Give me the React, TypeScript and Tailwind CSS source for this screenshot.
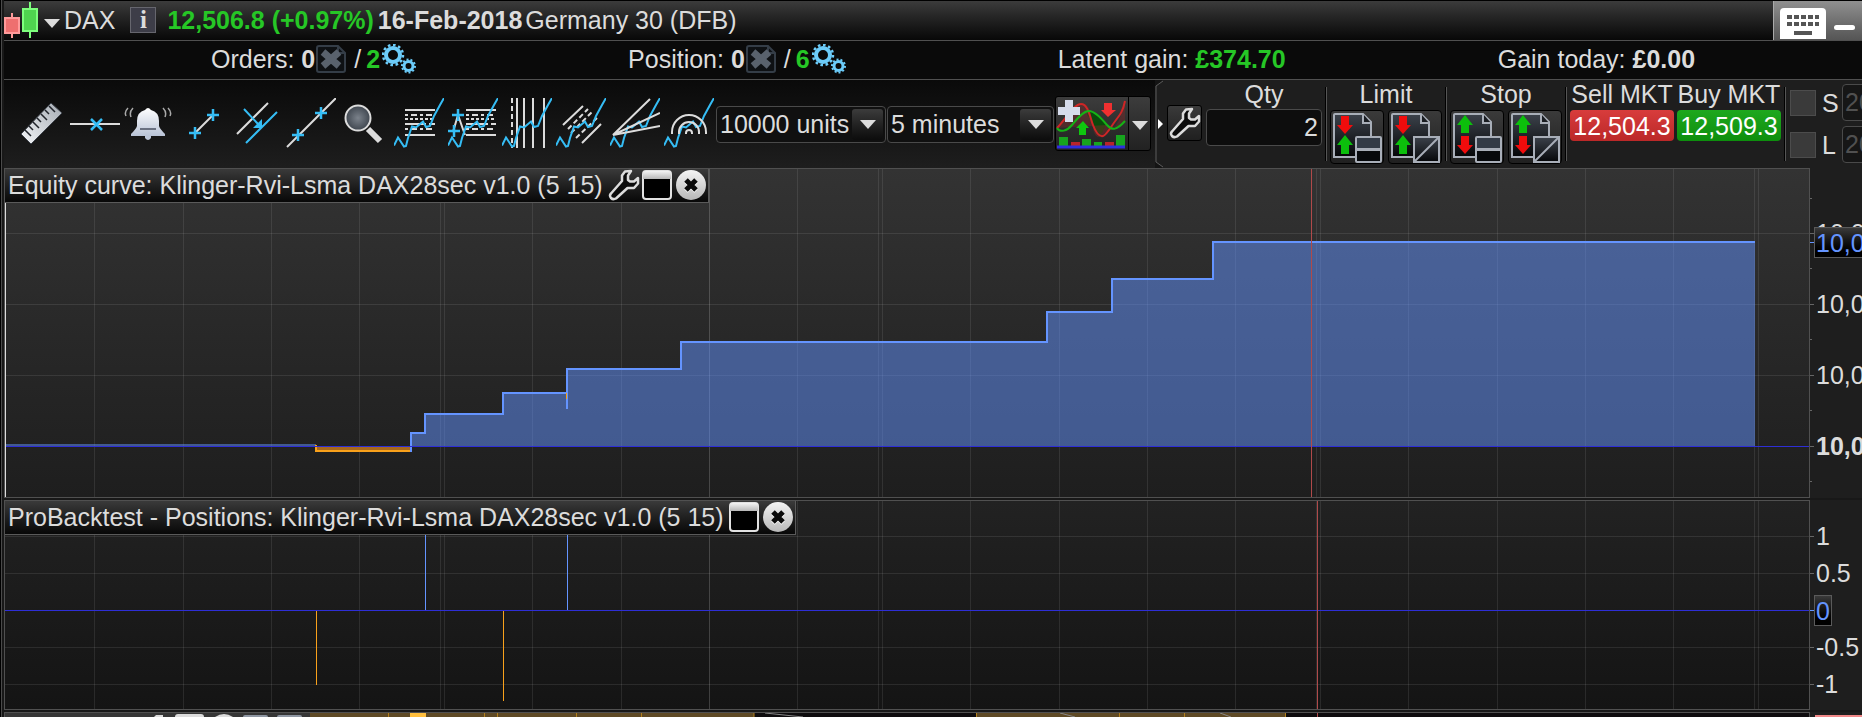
import React from 'react';
import clsx from 'clsx';

const GRID_X = [89, 178, 266, 354, 435, 439, 527, 616, 704, 792, 873, 877, 965, 1054, 1142, 1230, 1311, 1315, 1403, 1492, 1580, 1668, 1749, 1753];

const CURVE = '0,47.5 4,39.5 10,48.5 12,48 14,40 18,28.5 22,29.5 29,23.5 32,29 36,28 40,18 46,7 50,0';

const WHITE = '#dcdcdc';
const CYAN = '#35bdf5';

const Plus = ({ x, y }: { x: number; y: number }) => (
  <path d={`M${x - 6} ${y}h12M${x} ${y - 6}v12`} stroke={CYAN} strokeWidth="2.5" fill="none" />
);

const Curve = () => <polyline points={CURVE} stroke={CYAN} strokeWidth="2" fill="none" />;

const tools: { name: string; drawing: React.ReactNode }[] = [
  {
    name: 'Ruler',
    drawing: (
      <>
        <path d="M5 36 35 5 46 15 15 46z" fill="url(#metal)" stroke="#3b4048" strokeWidth="1" />
        <path d="M9 32l6 6M13 28l4 4M17 24l6 6M21 20l4 4M25 16l6 6M29 12l4 4M33 8l6 6" stroke="#20242a" strokeWidth="1.5" />
      </>
    ),
  },
  {
    name: 'Horizontal line',
    drawing: (
      <>
        <path d="M0 26H50" stroke={WHITE} strokeWidth="2" />
        <path d="M21 21l11 11M32 21L21 32" stroke={CYAN} strokeWidth="2.5" />
      </>
    ),
  },
  {
    name: 'Alert',
    drawing: (
      <>
        <path d="M21 12q3-4 6 0 8 2 8 11v5q1 3 6 8v2H7v-2q5-5 6-8v-5q0-9 8-11z" fill="url(#bell)" />
        <path d="M21 38h6v2q-3 4-6 0z" fill="#bcc6d8" />
        <path d="M16 31h16" stroke="#4a5160" strokeWidth="1.5" />
        <path d="M9 10q-4 4-2 9M4 10q-4 4-2 8M39 10q4 4 2 9M44 10q4 4 2 8" stroke="#aaa" strokeWidth="1.5" fill="none" />
      </>
    ),
  },
  {
    name: 'Segment',
    drawing: (
      <>
        <path d="M17 35L35 17" stroke={WHITE} strokeWidth="2" />
        <Plus x={17} y={35} />
        <Plus x={35} y={17} />
      </>
    ),
  },
  {
    name: 'Channel',
    drawing: (
      <>
        <path d="M5 36L36 5" stroke={WHITE} strokeWidth="2" />
        <path d="M14 45L45 14M12 11L26 26" stroke={CYAN} strokeWidth="2" />
        <path d="M30 30H21L30 21z" fill={CYAN} />
      </>
    ),
  },
  {
    name: 'Line',
    drawing: (
      <>
        <path d="M1 49L50 0" stroke={WHITE} strokeWidth="2" />
        <Plus x={12} y={37} />
        <Plus x={35} y={15} />
      </>
    ),
  },
  {
    name: 'Zoom',
    drawing: (
      <>
        <path d="M28 31L40 43" stroke={WHITE} strokeWidth="6" />
        <circle cx="18" cy="20" r="12.5" fill="url(#lens)" stroke={WHITE} strokeWidth="2" />
      </>
    ),
  },
  {
    name: 'Fibonacci retracement',
    drawing: (
      <>
        <path d="M11 12H41M11 37H41M11 26H32M35 26H41" stroke={WHITE} strokeWidth="2" />
        <path d="M11 17H41M11 31H41" stroke={WHITE} strokeWidth="2" strokeDasharray="3 3 6 3" />
        <path d="M11 21H41" stroke={WHITE} strokeWidth="2" strokeDasharray="3 2" />
        <Curve />
      </>
    ),
  },
  {
    name: 'Fibonacci extension',
    drawing: (
      <>
        <path d="M18 12H48M18 37H48M18 26H40M43 26H48M5 34L10 17L17 37" stroke={WHITE} strokeWidth="2" fill="none" />
        <path d="M18 17H48M18 31H48" stroke={WHITE} strokeWidth="2" strokeDasharray="3 3 6 3" />
        <path d="M18 21H48" stroke={WHITE} strokeWidth="2" strokeDasharray="3 2" />
        <Curve />
        <Plus x={10} y={17} />
        <Plus x={6} y={33} />
      </>
    ),
  },
  {
    name: 'Time zones',
    drawing: (
      <>
        <path d="M15 0V50M22 0V50M31 0V50M42 0V50" stroke={WHITE} strokeWidth="2" />
        <path d="M10 0V50" stroke={WHITE} strokeWidth="2" strokeDasharray="5 3" />
        <Curve />
      </>
    ),
  },
  {
    name: 'Fibonacci channel',
    drawing: (
      <>
        <path d="M7 27L27 8M26 45L45 26" stroke={WHITE} strokeWidth="2" />
        <path d="M12 31L32 11M15 35L36 14M20 40L41 20" stroke={WHITE} strokeWidth="2" strokeDasharray="5 3" />
        <Curve />
      </>
    ),
  },
  {
    name: 'Fan',
    drawing: (
      <>
        <Curve />
        <path d="M40 1L3 37L50 15M3 37L50 28" stroke={WHITE} strokeWidth="2" fill="none" />
      </>
    ),
  },
  {
    name: 'Arcs',
    drawing: (
      <>
        <Curve />
        <path
          d="M8 36v-2a17 17 0 0 1 34 0v2M15 36v-2a10 10 0 0 1 20 0v2M22 36v-1a3 3 0 0 1 6 0v1"
          stroke={WHITE}
          strokeWidth="2"
          fill="none"
        />
      </>
    ),
  },
];

const Defs = () => (
  <svg width="0" height="0" className="absolute" aria-hidden="true">
    <defs>
      <linearGradient id="metal" x1="1" y1="0" x2="0" y2="1">
        <stop offset="0" stopColor="#a6acb4" />
        <stop offset="1" stopColor="#f4f6f8" />
      </linearGradient>
      <linearGradient id="bell" x1="0" y1="0" x2="0" y2="1">
        <stop offset="0" stopColor="#fff" />
        <stop offset="1" stopColor="#b9c3d6" />
      </linearGradient>
      <radialGradient id="lens">
        <stop offset="0" stopColor="#7b828b" />
        <stop offset="1" stopColor="#3f464f" />
      </radialGradient>
      <linearGradient id="doc" x1="0" y1="0" x2="0" y2="1">
        <stop offset="0" stopColor="#3c424b" />
        <stop offset="1" stopColor="#050608" />
      </linearGradient>
      <linearGradient id="knob" x1="0" y1="0" x2="0" y2="1">
        <stop offset="0" stopColor="#f4f4f4" />
        <stop offset="1" stopColor="#b8b8b8" />
      </linearGradient>
    </defs>
  </svg>
);

const Wrench = () => (
  <svg width="32" height="32" viewBox="0 0 32 32">
    <path
      d="M17 2.500 23 2 20 6.500V11L22 12.500H26L30 9V14.500L26 19H19.500L8 29.500Q5 31 3 29 1 26.500 3 24.500L14 12V6.500z"
      fill="#0b0b0b"
      stroke="#dcdcdc"
      strokeWidth="2.5"
      strokeLinejoin="round"
    />
  </svg>
);

const WindowIcon = () => (
  <svg width="30" height="30" viewBox="0 0 30 30">
    <rect x="1" y="1" width="28" height="28" rx="3" fill="#000" stroke="#e2e2e2" strokeWidth="2" />
    <path d="M1 9V4q0-3 3-3h22q3 0 3 3v5z" fill="url(#knob)" />
  </svg>
);

const CloseIcon = () => (
  <svg width="30" height="30" viewBox="0 0 30 30">
    <circle cx="15" cy="15" r="15" fill="url(#knob)" />
    <path d="M10 10L20 20M20 10L10 20" stroke="#fff" strokeWidth="5" transform="translate(0 1)" />
    <path d="M10 10L20 20M20 10L10 20" stroke="#0a0a0a" strokeWidth="5" />
  </svg>
);

const CancelDoc = () => (
  <svg width="30" height="28" viewBox="0 0 30 28">
    <path d="M1 3q0-2 2-2h19l7 7v17q0 2-2 2H3q-2 0-2-2z" fill="#0e1114" stroke="#343d47" strokeWidth="2" />
    <path d="M22 1v7h7" fill="none" stroke="#343d47" strokeWidth="2" />
    <path d="M7 7L23 21M23 7L7 21" stroke="#59626d" strokeWidth="7" />
  </svg>
);

const Gears = () => (
  <svg width="34" height="30" viewBox="0 0 34 30" fill="none" stroke="#6cccfa">
    <circle cx="11" cy="11" r="7" strokeWidth="4" />
    <circle cx="11" cy="11" r="10" strokeWidth="2.5" pathLength="24" strokeDasharray="1 1" />
    <circle cx="26.500" cy="22" r="4.500" strokeWidth="3" />
    <circle cx="26.500" cy="22" r="6.500" strokeWidth="2" pathLength="20" strokeDasharray="1 1" />
  </svg>
);

const Arrow = () => (
  <svg width="16" height="9" viewBox="0 0 16 9">
    <path d="M0 0H16L8 9z" fill="#dcdcdc" />
  </svg>
);

const OrderIcon = ({ stop, diagonal }: { stop?: boolean; diagonal?: boolean }) => (
  <svg width="52" height="52" viewBox="0 0 52 52">
    <path d="M3 4q0-1 1-1H32L40 11V46H3z" fill="url(#doc)" stroke="#a8aeb8" strokeWidth="2" />
    <path d="M32 3V12H40" fill="#1a1d22" stroke="#a8aeb8" strokeWidth="2" />
    {stop ? (
      <>
        <path d="M14 4L22 14H18V22H10V14H6z" fill="#0cbf0c" />
        <path d="M10 25H18V34H22L14 43L6 34H10z" fill="#f00c0c" />
      </>
    ) : (
      <>
        <path d="M10 5H18V14H22L14 23L6 14H10z" fill="#f00c0c" />
        <path d="M14 24L22 34H18V43H10V34H6z" fill="#0cbf0c" />
      </>
    )}
    {diagonal ? (
      <>
        <rect x="25" y="26" width="25" height="25" fill="url(#doc)" stroke="#a8aeb8" strokeWidth="2" />
        <path d="M26 50L49 27" stroke="#a8aeb8" strokeWidth="2" />
      </>
    ) : (
      <>
        <rect x="25" y="26" width="25" height="25" rx="1" fill="#07090c" stroke="#a8aeb8" strokeWidth="2" />
        <rect x="26" y="27" width="23" height="11" fill="#333b46" />
        <path d="M25 38.500H50" stroke="#a8aeb8" strokeWidth="3" />
      </>
    )}
  </svg>
);

const IndicatorIcon = () => (
  <svg width="70" height="52" viewBox="0 0 70 52" className="block">
    <path d="M31 18Q36 24 39 34 45 44 50 26 40 14 31 14z" fill="#0b4a0b" />
    <path d="M1 31Q14 10 24 7T36 24 45 39 58 30 69 4V24Q60 34 50 28" fill="#7a2a2a" fillOpacity="0.45" />
    <path d="M1 31C10 22 18 7 25 7S34 20 37 28 43 40 47 39 56 28 60 23 67 14 69 4" fill="none" stroke="#cf2626" strokeWidth="2" />
    <path d="M1 31C4 36 11 34 16 28S27 14 33 14 46 22 51 28 61 33 69 24" fill="none" stroke="#15b315" strokeWidth="2" />
    <path d="M3 40h9v9H3zM26 42h9v7h-9zM38 45h8v4h-8zM60 38h9v11h-9z" fill="#17a51e" />
    <path d="M15 45h9v4h-9zM49 45h9v4h-9z" fill="#b8242a" />
    <path d="M1 50H69" stroke="#2f2fe0" strokeWidth="3" />
    <path d="M9 3h8v7h7v8h-7v7H9v-7H2v-8h7z" fill="#d6dcec" />
    <path d="M48 6h8v7h4l-8 7-7-7h3z" fill="#f03030" />
    <path d="M27 24l6 7h-3v7h-7v-7h-3z" fill="#0fc80f" />
  </svg>
);

const Select = ({ label, options, className }: { label: string; options: string[]; className: string }) => (
  <div className={clsx('relative h-[37px] shrink-0', className)}>
    <select
      aria-label={label}
      className="h-full w-full appearance-none rounded-[4px] border border-[#4a4a4a] bg-[#101010] pb-px pl-[3px] text-[#dcdcdc] outline-none"
    >
      {options.map((option) => (
        <option key={option}>{option}</option>
      ))}
    </select>
    <span className="pointer-events-none absolute top-[3px] right-[3px] flex h-[31px] w-[31px] items-center justify-center rounded-[3px] bg-linear-to-b from-[#3c3c3c] to-[#0c0c0c]">
      <Arrow />
    </span>
  </div>
);

const Divider = () => <div className="mx-[3px] mt-[7px] h-[74px] w-[2px] shrink-0 border-r border-[#555] bg-black" />;

const OrderGroup = ({ title, stop }: { title: string; stop?: boolean }) => (
  <div className="flex shrink-0 flex-col items-center">
    <div className="h-[30px] leading-[29px]">{title}</div>
    <div className="flex gap-1">
      {[false, true].map((diagonal) => (
        <button
          type="button"
          key={String(diagonal)}
          aria-label={`${title} order`}
          className="flex h-[54px] w-[54px] items-center justify-center rounded-[4px] border border-black bg-linear-to-b from-[#3a3a3a] to-[#202020]"
        >
          <OrderIcon stop={stop} diagonal={diagonal} />
        </button>
      ))}
    </div>
  </div>
);

const Counter = ({ label, value, total }: { label: string; value: string; total: string }) => (
  <div className="flex shrink-0 items-center">
    <span className="whitespace-pre">{label} </span>
    <b>{value}</b>
    <button aria-label={`Close all ${label}`} className="mr-2 ml-px">
      <CancelDoc />
    </button>
    <span className="mr-[5px]">/</span>
    <b className="text-[#26c726]">{total}</b>
    <span className="ml-[2px]">
      <Gears />
    </span>
  </div>
);

const PanelTitle = ({ title, settings }: { title: string; settings?: boolean }) => (
  <div className="absolute top-0 left-0 flex h-[34px] items-center border-r border-b border-[#5a5a5a] bg-linear-to-b from-[#3a3a3a] to-[#080808] pr-[2px] pb-px pl-[3px]">
    <h2 className="mr-[5px] whitespace-nowrap">{title}</h2>
    {settings && (
      <button aria-label="Settings" className="mr-[2px]">
        <Wrench />
      </button>
    )}
    <button aria-label="Maximise" className="mr-1">
      <WindowIcon />
    </button>
    <button aria-label="Close">
      <CloseIcon />
    </button>
  </div>
);

const Grid = ({ height, rows }: { height: number; rows: number[] }) => (
  <g stroke="#fff" strokeOpacity="0.09" shapeRendering="crispEdges">
    {GRID_X.map((x) => (
      <path key={x} d={`M${x}.5 0V${height}`} strokeOpacity={x === 704 ? 0.18 : 0.09} />
    ))}
    {rows.map((y) => (
      <path key={y} d={`M0 ${y}.5H1805`} />
    ))}
  </g>
);

const EquityPanel = () => (
  <section className="flex h-[330px]">
    <div className="relative min-w-0 flex-1 border border-[#505050] bg-linear-to-b from-[#333] to-[#1e1e1e]">
      <svg className="block h-full w-full" viewBox="0 0 1804 328" preserveAspectRatio="none">
        <Grid height={328} rows={[64, 135, 206]} />
        <path
          d="M406 277V264H420V245H498V224H562V200H676V173H1042V143H1107V110H1208V73H1750V277z"
          fill="#6494ff"
          fillOpacity="0.5"
        />
        <path d="M311 277H406V282H311z" fill="#a8681c" />
        <path d="M0 276H311" stroke="#6494ff" strokeWidth="1" />
        <path d="M311 276V282H406" fill="none" stroke="#f9a11b" strokeWidth="2" />
        <path
          d="M406 283V264H420V245H498V224H562V240M562 224V200H676V173H1042V143H1107V110H1208V73H1750"
          fill="none"
          stroke="#6494ff"
          strokeWidth="2"
          shapeRendering="crispEdges"
        />
        <path d="M561.500 224V230" stroke="#f9a11b" />
        <path d="M0 277.500H1804" stroke="#2e2ed6" />
        <path d="M1306.500 0V328" stroke="#b04a4a" />
        <path d="M0 34V328" stroke="#dcdcdc" strokeWidth="2" />
      </svg>
      <PanelTitle title="Equity curve: Klinger-Rvi-Lsma DAX28sec v1.0 (5 15)" settings />
    </div>
    <div className="relative w-[52px] overflow-hidden bg-[#1e1e1e] pt-[30px]">
      <svg className="absolute top-0 left-0" width="4" height="330" shapeRendering="crispEdges">
        <path d="M0 30.500H2M0 65.500H4M0 100.500H2M0 136.500H4M0 171.500H2M0 207.500H4M0 242.500H2M0 278.500H4M0 313.500H2" stroke="#666" />
        <path d="M0 74.500H4" stroke="#6494ff" />
      </svg>
      <ul className="pl-[6px] leading-[71px]">
        <li>10,0</li>
        <li>10,0</li>
        <li>10,0</li>
        <li className="font-bold">10,0</li>
      </ul>
      <output className="absolute top-[59px] left-1 h-[31px] border border-[#5a5a5a] bg-linear-to-b from-[#3a3a3a] to-black pr-3 pl-px leading-[30px] text-[#6494ff]">
        10,0
      </output>
    </div>
  </section>
);

const PositionsPanel = () => (
  <section className="mt-[2px] flex h-[210px]">
    <div className="relative min-w-0 flex-1 border border-[#505050] bg-linear-to-b from-[#222] to-[#141414]">
      <svg className="block h-full w-full" viewBox="0 0 1804 208" preserveAspectRatio="none">
        <Grid height={208} rows={[35, 72, 146, 183]} />
        <path d="M420.500 34V109M562.500 34V109" stroke="#6494ff" />
        <path d="M311.500 110V184M498.500 110V200" stroke="#f9a11b" />
        <path d="M0 109.500H1804" stroke="#2e2ed6" />
        <path d="M1312.500 0V208" stroke="#b04a4a" />
      </svg>
      <PanelTitle title="ProBacktest - Positions: Klinger-Rvi-Lsma DAX28sec v1.0 (5 15)" />
    </div>
    <div className="relative w-[52px] overflow-hidden bg-[#1e1e1e] pt-[18px]">
      <svg className="absolute top-0 left-0" width="4" height="210" shapeRendering="crispEdges">
        <path d="M0 36.500H4M0 73.500H4M0 147.500H4M0 184.500H4" stroke="#666" />
        <path d="M0 110.500H4" stroke="#6494ff" />
      </svg>
      <ul className="pl-[6px] leading-[37px]">
        <li>1</li>
        <li>0.5</li>
        <li className="-ml-[2px] flex h-[37px] items-center">
          <output className="h-[31px] border border-[#5a5a5a] bg-linear-to-b from-[#3a3a3a] to-black px-px leading-[30px] text-[#6494ff]">0</output>
        </li>
        <li>-0.5</li>
        <li>-1</li>
      </ul>
    </div>
  </section>
);

// Only the top edge of the trade list panel is visible
const NextPanel = () => (
  <section className="mt-[2px] flex h-[5px] overflow-hidden">
    <div className="min-w-0 flex-1 border-t border-l border-[#505050] bg-[#0e0c0e]">
      <svg className="block h-1 w-full" viewBox="0 0 1805 4" preserveAspectRatio="none">
        <path d="M0 0H305V4H0z" fill="#363636" />
        <path d="M305 0H749V4H305zM971 0H1280V4H971z" fill="#5f4a25" />
        <path d="M383.500 0V4M479.500 0V4M492.500 0V4M571.500 0V4M636.500 0V4M749 0V4M971.500 0V4M1114.500 0V4M1179.500 0V4M1280.500 0V4" stroke="#b27f1c" />
        <path d="M405 0H421V4H405z" fill="#ffbe3c" />
        <path d="M149 4l2-2h7v2zM170 4q0-3 3-3h23q3 0 3 3zM210 4q9-6 18 0z" fill="#dcdcdc" />
        <path d="M238 4q0-2 2-2h21q2 0 2 2zM272 4q0-2 2-2h21q2 0 2 2z" fill="#8f97a3" />
        <path d="M760 0L798 4M1055 0L1070 4M1215 0L1226 4" stroke="#888" />
        <path d="M1312.500 0V4" stroke="#b04a4a" />
        <path d="M1804.500 0V4" stroke="#505050" />
      </svg>
    </div>
    <div className="w-[52px] bg-[#1e1e1e] pt-[3px] pl-[5px]">
      <div className="h-[2px] bg-[#f08888]" />
    </div>
  </section>
);

const App = () => {
  return (
    <div className="min-h-screen overflow-hidden bg-black pl-px font-['Liberation_Sans',Arial,sans-serif] text-[25px] leading-[30px] text-[#dcdcdc]">
      <Defs />
      <div className="border-l border-[#4a4a4a] bg-[#181818] pl-[2px]">
        {/* Instrument bar */}
        <header className="flex h-[41px] items-center overflow-hidden border-t border-b border-t-black border-b-[#505050] bg-linear-to-b from-[#3c3c3c] to-[#080808] pb-[2px]">
          <svg width="34" height="36" viewBox="0 0 34 36" className="mr-[6px] shrink-0">
            <path d="M8 11V36" stroke="#ff9a9a" strokeWidth="2" />
            <rect x="1" y="16" width="14" height="15" fill="#ee6f6f" stroke="#ff9a9a" strokeWidth="2" />
            <path d="M26 0V36" stroke="#7dff7d" strokeWidth="2" />
            <rect x="19" y="7" width="14" height="22" fill="#4fd44f" stroke="#7dff7d" strokeWidth="2" />
          </svg>
          <button aria-label="Choose instrument" className="mt-[7px] mr-1 shrink-0 self-center">
            <Arrow />
          </button>
          <h1 className="mr-[15px]">DAX</h1>
          <button
            aria-label="Information"
            className="mr-[11px] h-[26px] w-[26px] shrink-0 border border-[#66666e] bg-[#3d3d48] font-['Liberation_Serif',serif] leading-[22px] font-bold"
          >
            i
          </button>
          <b className="mr-1 whitespace-nowrap text-[#26c726]">12,506.8 (+0.97%)</b>
          <b className="mr-[3px] whitespace-nowrap">16-Feb-2018</b>
          <span className="whitespace-nowrap">Germany 30 (DFB)</span>
          <div className="-mb-[2px] ml-auto flex shrink-0 items-end self-stretch border-l border-[#aaa] bg-linear-to-b from-[#909090] to-[#555] pr-[7px] pb-px pl-[6px]">
            <button aria-label="Keyboard shortcuts" className="mr-2">
              <svg width="46" height="31" viewBox="0 0 46 31" className="block">
                <path d="M0 4q0-4 4-4h38q4 0 4 4v27H0z" fill="#fff" />
                <path d="M7 9H39M7 16H39" stroke="#555" strokeWidth="4" strokeDasharray="5 2" />
                <path d="M14 25H32" stroke="#555" strokeWidth="4" />
              </svg>
            </button>
            <button aria-label="Minimise" className="mb-[9px] h-[5px] w-[21px] rounded-full bg-white" />
          </div>
        </header>

        {/* Account summary */}
        <div className="flex h-[39px] items-center gap-[212px] overflow-hidden border-b border-[#505050] bg-[#0a0a0a] pb-[2px] pl-[207px] whitespace-nowrap">
          <Counter label="Orders:" value="0" total="2" />
          <Counter label="Position:" value="0" total="6" />
          <div>
            Latent gain: <b className="text-[#26c726]">£374.70</b>
          </div>
          <div>
            Gain today: <b>£0.00</b>
          </div>
        </div>

        {/* Toolbar */}
        <div className="flex h-[88px] items-center overflow-hidden bg-linear-to-b from-[#0a0a0a] to-[#1e1e1e] pl-3">
          <div className="mr-[2px] flex shrink-0 gap-1 pb-[2px]">
            {tools.map((tool) => (
              <button key={tool.name} aria-label={tool.name} className="h-[50px] w-[50px]">
                <svg width="50" height="50" viewBox="0 0 50 50">
                  {tool.drawing}
                </svg>
              </button>
            ))}
          </div>
          <Select label="Units" options={['10000 units']} className="mr-px w-[170px]" />
          <Select label="Timeframe" options={['5 minutes']} className="mr-px w-[167px]" />
          <div className="mr-1 mb-[2px] flex h-[55px] shrink-0 rounded-[3px] border border-black bg-linear-to-b from-[#3c3c3c] to-[#222]">
            <button aria-label="Add indicator" className="w-[72px]">
              <IndicatorIcon />
            </button>
            <button aria-label="Indicator list" className="flex w-[22px] items-center justify-center border-l border-black pt-1">
              <Arrow />
            </button>
          </div>

          <form className="flex flex-1 self-stretch bg-[#1e1e1e]">
            <svg width="12" height="88" viewBox="0 0 12 88" className="shrink-0">
              <path d="M0 0H8L0 6zM0 88H8L0 82z" fill="#141414" />
              <path d="M8 1L1 6V82L8 87" fill="none" stroke="#5a5a5a" />
              <path d="M3 39L8 44L3 49z" fill="#fff" />
            </svg>
            <button
              type="button"
              aria-label="Order settings"
              className="mt-[25px] flex h-[36px] w-[35px] shrink-0 items-center justify-center rounded-[3px] border border-black bg-linear-to-b from-[#3a3a3a] to-[#202020]"
            >
              <Wrench />
            </button>
            <div className="ml-1 flex w-[116px] shrink-0 flex-col items-center">
              <label htmlFor="qty" className="h-[29px] leading-[29px]">
                Qty
              </label>
              <input
                id="qty"
                defaultValue="2"
                className="h-[37px] w-full rounded-[4px] border border-[#4a4a4a] bg-[#0d0d0d] pr-[3px] text-right outline-none"
              />
            </div>
            <Divider />
            <OrderGroup title="Limit" />
            <Divider />
            <OrderGroup title="Stop" stop />
            <Divider />
            <div className="flex shrink-0 gap-[3px] text-center whitespace-nowrap">
              <div className="w-[104px]">
                <div className="h-[30px] leading-[29px]">Sell MKT</div>
                <button type="button" className="h-[31px] w-full rounded-[4px] bg-linear-to-b from-[#d83c3c] to-[#bb2828] text-white">
                  12,504.3
                </button>
              </div>
              <div className="w-[104px]">
                <div className="h-[30px] leading-[29px]">Buy MKT</div>
                <button type="button" className="h-[31px] w-full rounded-[4px] bg-linear-to-b from-[#1ea81e] to-[#0d8e0d] text-white">
                  12,509.3
                </button>
              </div>
            </div>
            <Divider />
            <div className="flex shrink-0 flex-col gap-[5px] pt-1">
              {['S', 'L'].map((side) => (
                <div key={side} className="flex h-[37px] items-center">
                  <input
                    id={`use-${side}`}
                    type="checkbox"
                    className="mr-[6px] ml-px h-[26px] w-[26px] appearance-none border border-[#4c4c4c] bg-[#3a3a3a]"
                  />
                  <label htmlFor={`use-${side}`} className="w-5">
                    {side}
                  </label>
                  <input
                    aria-label={`${side} distance`}
                    defaultValue="20"
                    className="h-[37px] w-[60px] rounded-[4px] border border-[#4a4a4a] bg-[#161616] pl-[2px] text-[#505050] outline-none"
                  />
                </div>
              ))}
            </div>
          </form>
        </div>

        <main>
          <EquityPanel />
          <PositionsPanel />
          <NextPanel />
        </main>
      </div>
    </div>
  );
};

export default App;
